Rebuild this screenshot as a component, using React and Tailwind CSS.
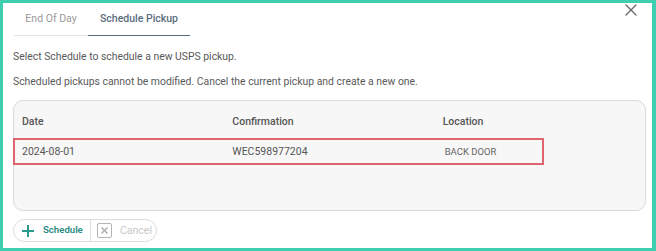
const rows = [{ date: '2024-08-01', confirmation: 'WEC598977204', location: 'BACK DOOR' }];

const App = () => {
  return (
    <div className="w-[656px] h-[251px] bg-white border-[3px] border-r-4 border-[#3ecfb0] font-['Roboto',sans-serif] relative overflow-hidden">
      <button className="absolute left-[622px] top-[1px] text-[#6a6a6a]">
        <svg width="12" height="12" viewBox="0 0 12 12" fill="none" stroke="currentColor" strokeWidth="1.4" strokeLinecap="round">
          <path d="M1 1L11 11M11 1L1 11" />
        </svg>
      </button>

      <div className="flex ml-[11px] h-[33px]">
        <div className="w-[74px] flex items-center justify-center text-[10.5px] text-[#9a9a9a] border-b border-[#e3e3e3]">End Of Day</div>
        <div className="w-[102px] flex items-center justify-center text-[10.5px] font-medium text-[#5a6d7e] border-b-[1.5px] border-[#5c6b7a]">Schedule Pickup</div>
      </div>

      <p className="ml-[10px] mt-[14px] text-[10.4px] text-[#5a5a5a] leading-[14px]">Select Schedule to schedule a new USPS pickup.</p>
      <p className="ml-[10px] mt-[11px] text-[10.4px] text-[#5a5a5a] leading-[14px]">Scheduled pickups cannot be modified. Cancel the current pickup and create a new one.</p>

      <div className="ml-[10px] mt-[11px] w-[633px] h-[111px] rounded-[10px] border border-[#d9d9d9] bg-[#f7f7f7] relative">
        <div className="grid grid-cols-3 h-[38px] items-center pt-[4px]">
          <div className="pl-[8px] text-[10.5px] font-medium text-[#555]">Date</div>
          <div className="pl-[8px] text-[10.5px] font-medium text-[#555]">Confirmation</div>
          <div className="pl-[8px] text-[10.5px] font-medium text-[#555]">Location</div>
        </div>
        {rows.map(row => (
          <div key={row.confirmation} className="grid grid-cols-3 h-[26px] items-center">
            <div className="pl-[8px] text-[10.5px] text-[#555]">{row.date}</div>
            <div className="pl-[8px] text-[10.5px] text-[#555]">{row.confirmation}</div>
            <div className="pl-[10px] text-[9.5px] text-[#666]">{row.location}</div>
          </div>
        ))}
        <div className="absolute left-[-1px] top-[37px] w-[531px] h-[27px] border-2 border-[#de6470]"></div>
      </div>

      <div className="ml-[10px] mt-[8px] inline-flex h-[23px] rounded-full border border-[#dcdcdc] overflow-hidden">
        <button className="w-[77px] flex items-center pl-[8px] text-[9.6px] font-semibold text-[#2a8a84] border-r border-[#dcdcdc]">
          <svg width="12" height="12" viewBox="0 0 12 12" fill="none" stroke="#2a9a8c" strokeWidth="2">
            <path d="M6 0V12M0 6H12" />
          </svg>
          <span className="ml-[9px]">Schedule</span>
        </button>
        <button className="w-[65px] flex items-center pl-[6px] text-[10.5px] text-[#c8c8c8]">
          <span className="w-[15px] h-[15px] border-[1.5px] border-[#b5b5b5] rounded-[2px] flex items-center justify-center">
            <svg width="7" height="7" viewBox="0 0 7 7" fill="none" stroke="#a8a8a8" strokeWidth="1.3">
              <path d="M0.5 0.5L6.5 6.5M6.5 0.5L0.5 6.5" />
            </svg>
          </span>
          <span className="ml-[8px]">Cancel</span>
        </button>
      </div>
    </div>
  );
};

export default App;
